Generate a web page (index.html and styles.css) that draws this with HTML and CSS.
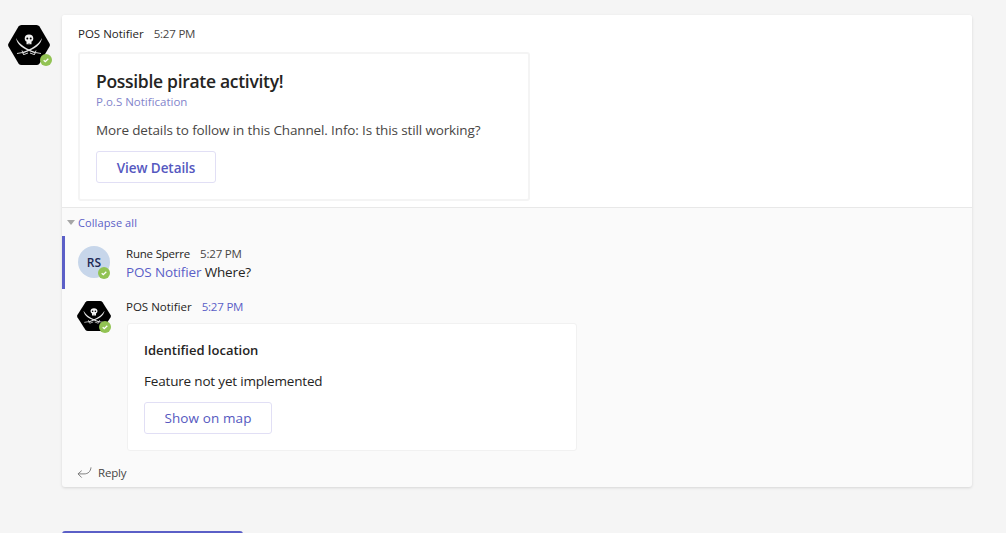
FILE: index.html
```html
<!DOCTYPE html>
<html lang="en">
<head>
<meta charset="utf-8">
<title>POS Notifier</title>
<link rel="stylesheet" href="styles.css">
</head>
<body>
<svg class="defs" width="0" height="0" aria-hidden="true">
  <defs>
    <symbol id="pirate" viewBox="0 0 42 40" preserveAspectRatio="none">
      <path d="M10.500 1.500Q11.500 0 13.500 0H28.500Q30.500 0 31.500 1.500L41.500 18.500Q42.300 20 41.500 21.500L31.500 38.500Q30.500 40 28.500 40H13.500Q11.500 40 10.500 38.500L.5 21.500Q-.3 20 .5 18.500Z" fill="#000"/>
      <path d="M21 9.500c-2.700 0-4.300 1.700-4.300 3.900 0 1.600.8 2.600 1.800 3.200v2.600h5v-2.600c1-.6 1.800-1.600 1.800-3.200 0-2.200-1.600-3.900-4.300-3.900z" fill="#f2f2f2"/>
      <circle cx="19.300" cy="13.600" r="1" fill="#000"/><circle cx="22.700" cy="13.600" r="1" fill="#000"/>
      <path d="M20.400 18v1M21.600 18v1" stroke="#555" stroke-width=".5"/>
      <path d="M8 13c1 6.500 6 11 19.500 15.500l.8-1.200C17.500 23.500 12 20 8 13z" fill="#e6e6e6"/>
      <path d="M34 13c-1 6.500-6 11-19.500 15.500l-.8-1.200C24.500 23.500 30 20 34 13z" fill="#e6e6e6"/>
      <path d="M9 28.500l5.500-1M33 28.500l-5.500-1M14 25.500l1.800 4.500M28 25.500l-1.800 4.500M16 29.500l4-1.500M26 29.500l-4-1.500" stroke="#cfcfcf" stroke-width="1" fill="none"/>
    </symbol>
    <symbol id="check" viewBox="0 0 12 12">
      <circle cx="6" cy="6" r="6" fill="#92c353"/>
      <path d="M3.700 6.200l1.600 1.500 3-3" stroke="#fff" stroke-width="1.300" fill="none"/>
    </symbol>
  </defs>
</svg>
<main class="thread">
  <div class="avatar-col">
    <div class="avatar avatar-large">
      <svg class="avatar-art" aria-hidden="true"><use href="#pirate"/></svg>
      <svg class="badge" aria-hidden="true"><use href="#check"/></svg>
    </div>
  </div>
  <section class="card">
    <div class="root-post">
      <div class="meta"><span class="name">POS Notifier</span><span class="time">5:27 PM</span></div>
      <article class="adaptive adaptive-root">
        <h2 class="title">Possible pirate activity!</h2>
        <p class="subtitle">P.o.S Notification</p>
        <p class="text">More details to follow in this Channel. Info: Is this still working?</p>
        <button class="action action-view">View Details</button>
      </article>
    </div>
    <div class="replies">
      <div class="collapse"><span class="caret"></span><span>Collapse all</span></div>
      <div class="reply reply-marked">
        <div class="avatar avatar-rs">RS<svg class="badge" aria-hidden="true"><use href="#check"/></svg></div>
        <div class="reply-body">
          <div class="meta"><span class="name name-person">Rune Sperre</span><span class="time">5:27 PM</span></div>
          <p class="message"><span class="mention">POS Notifier</span> Where?</p>
        </div>
      </div>
      <div class="reply reply-bot">
        <div class="avatar avatar-small">
          <svg class="avatar-art" aria-hidden="true"><use href="#pirate"/></svg>
          <svg class="badge" aria-hidden="true"><use href="#check"/></svg>
        </div>
        <div class="reply-body">
          <div class="meta"><span class="name">POS Notifier</span><span class="time time-link">5:27 PM</span></div>
          <article class="adaptive adaptive-reply">
            <h3 class="card-heading">Identified location</h3>
            <p class="text text-reply">Feature not yet implemented</p>
            <button class="action action-map">Show on map</button>
          </article>
        </div>
      </div>
      <div class="reply-link">
        <svg class="reply-icon" viewBox="0 0 16 14" aria-hidden="true"><path d="M15 1.500C14.500 6 12 8.500 7.500 8.500H1M1 8.500L5 5M1 8.500L5 12.500" fill="none" stroke="#777" stroke-width="1"/></svg>
        <span>Reply</span>
      </div>
    </div>
  </section>
</main>
<div class="footer-row"><button class="new-conversation" aria-label="New conversation"></button></div>
</body>
</html>
```
FILE: styles.css
```css
* { box-sizing: border-box; }
html, body { height: 100%; }
body {
  margin: 0;
  height: 533px;
  overflow: hidden;
  background: #f5f5f5;
  color: #252423;
  font-family: "Open Sans", "Noto Sans", sans-serif;
  padding: 15px 34px 0 8px;
}
.defs { position: absolute; }
p, h2, h3 { margin: 0; font-weight: 400; }
.thread { display: flex; height: 472px; }
.avatar-col { width: 54px; flex: none; padding-top: 10px; }
.avatar { position: relative; flex: none; }
.avatar-large { width: 42px; height: 40px; }
.avatar-small { width: 34px; height: 30px; margin-top: 2px; }
.avatar-art { display: block; width: 100%; height: 100%; }
.badge { position: absolute; width: 12px; height: 12px; right: -2px; bottom: -1px; }
.avatar-small .badge { right: 0; bottom: -2px; }
.avatar-rs {
  width: 32px; height: 32px; border-radius: 50%;
  background: #c7d6ea; color: #1d2a55;
  font-size: 12px; font-weight: 600;
  display: flex; align-items: center; justify-content: center;
}
.avatar-rs .badge { right: 0; bottom: -1px; }
.card {
  flex: 1; min-width: 0;
  background: #fafafa;
  border-radius: 3px;
  box-shadow: 0 1px 3px rgba(0,0,0,.13);
  display: flex; flex-direction: column;
  overflow: hidden;
}
.root-post { height: 193px; flex: none; background: #fff; border-bottom: 1px solid #e8e8e8; padding: 11px 16px 0; }
.meta { display: flex; align-items: baseline; gap: 10px; font-size: 11.500px; line-height: 16px; height: 16px; }
.name { color: #252423; }
.name-person { letter-spacing: -.2px; }
.time { color: #484644; letter-spacing: -.2px; }
.time-link { color: #5b5fc7; }
.adaptive { background: #fff; border-radius: 3px; }
.adaptive-root {
  width: 452px; height: 149px; margin-top: 10px;
  border: 2px solid #f4f4f4; padding: 15px 16px 0;
}
.title { font-size: 17.500px; line-height: 24px; font-weight: 600; color: #252423; letter-spacing: -.3px; }
.subtitle { font-size: 11.500px; line-height: 16px; color: #8385cb; margin-top: 1px; }
.text { font-size: 13.500px; line-height: 18px; color: #484644; margin-top: 11px; letter-spacing: -.13px; }
.action {
  display: block; background: #fff; border: 1px solid #e1dff5; border-radius: 3px;
  color: #5558c0; font: 600 13.500px/18px "Open Sans", "Noto Sans", sans-serif;
  padding: 0;
}
.action-view { width: 120px; height: 32px; margin-top: 12px; padding-top: 1px; letter-spacing: -.06px; }
.action-map { width: 128px; height: 32px; margin-top: 12px; font-weight: 400; letter-spacing: .1px; }
.replies { flex: 1; display: flex; flex-direction: column; }
.collapse { display: flex; align-items: center; gap: 3px; padding: 1px 0 0 5px; height: 28px; font-size: 11px; line-height: 16px; color: #5b5fc7; letter-spacing: .1px; }
.caret { width: 0; height: 0; border: 4px solid transparent; border-top: 5px solid #a6a6a6; border-bottom: 0; }
.reply { display: flex; }
.reply-marked { height: 53px; padding: 10px 0 0 13px; border-left: 3px solid #5b5fc7; gap: 16px; }
.reply-bot { padding: 10px 0 0 15px; gap: 15px; height: 162px; }
.reply-body { min-width: 0; }
.message { font-size: 13.500px; line-height: 18px; margin-top: 1px; letter-spacing: -.15px; color: #252423; }
.mention { color: #5b5fc7; }
.adaptive-reply {
  width: 450px; height: 128px; margin: 8px 0 0 1px;
  border: 1px solid #f1f1f1; padding: 17px 16px 0;
}
.card-heading { font-size: 13px; line-height: 18px; font-weight: 600; color: #252423; }
.text-reply { color: #252423; margin-top: 13px; letter-spacing: -.18px; }
.reply-link { display: flex; align-items: center; gap: 6px; padding-left: 15px; font-size: 11.500px; color: #484644; letter-spacing: -.2px; height: 24px; margin-top: 9px; }
.reply-icon { width: 15px; height: 13px; }
.footer-row { padding: 44px 0 0 54px; height: 46px; overflow: hidden; }
.new-conversation { display: block; width: 181px; height: 32px; background: #5b5fc7; border: 0; border-radius: 3px; padding: 0; }
```
